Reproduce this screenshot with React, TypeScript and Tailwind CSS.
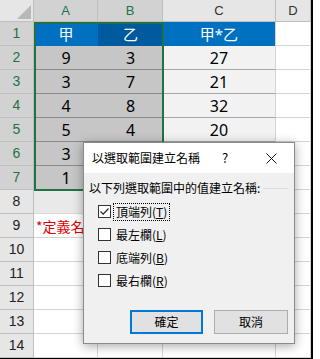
import React from "react";

const cols = ["A", "B", "C", "D"];

// B6:C7 sit under the dialog, so they are left out
const data: (string | number)[][] = [
  ["甲", "乙", "甲*乙"],
  [9, 3, 27],
  [3, 7, 21],
  [4, 8, 32],
  [5, 4, 20],
  [3, "", ""],
  [1, "", ""],
];

const rows = Array.from({ length: 14 }, (_, i) => i + 1);

function cellClass(r: number, c: number): string {
  if (r === 1 && c === 0) return "bg-[#0070c0] text-white";
  if (r === 1 && c === 1) return "bg-[#005a9e] text-white";
  if (r === 1 && c === 2) return "bg-[#0070c0] text-white border-r border-[#d4d4d4]";
  if (r <= 7 && c < 2) return "bg-[#c6c6c6] border-b border-[#8a8a8a] text-black";
  if (r <= 7 && c === 2) return "bg-[#f2f2f2] border-b border-r border-b-[#a6a6a6] border-r-[#d4d4d4] text-black";
  if (r === 8 && c < 3) return "bg-[#e9e9e9] border-b border-r border-[#d9d9d9]";
  return "bg-white border-r border-b border-[#d4d4d4]";
}

function CheckRow({ label, k, checked, focused }: { label: string; k: string; checked?: boolean; focused?: boolean }) {
  return (
    <div className="flex h-[23px] items-center pl-[14px]">
      <div className="flex h-[13px] w-[13px] items-center justify-center border border-[#333333] bg-white">
        {checked && (
          <svg width="11" height="11" viewBox="0 0 11 11">
            <polyline points="1.5,5.5 4.2,8.2 9.5,2.5" fill="none" stroke="#222" strokeWidth="1.2" />
          </svg>
        )}
      </div>
      <span
        className={
          focused
            ? "ml-[2px] border border-dotted border-black px-[2px] text-[12px] leading-[16px] text-black"
            : "ml-[2px] border border-transparent px-[2px] text-[12px] leading-[16px] text-black"
        }
      >
        {label}(<span className="underline">{k}</span>)
      </span>
    </div>
  );
}

export default function App() {
  return (
    <div className="relative h-[359px] w-[313px] overflow-hidden border-b border-r-2 border-black bg-white font-['Liberation_Sans','Noto_Sans_CJK_TC',sans-serif]">
      <div className="grid grid-cols-[34px_64px_65px_113px_35px] grid-rows-[22px_repeat(14,24px)]">
        {/* corner */}
        <div className="relative border-b border-r border-[#bfbfbf] bg-[#e6e6e6]">
          <svg className="absolute left-0 top-0" width="34" height="22" viewBox="0 0 34 22">
            <polygon points="31,5 31,19 17,19" fill="#b8b8b8" />
          </svg>
        </div>
        {cols.map((c, i) => (
          <div
            key={c}
            className={
              i < 2
                ? "flex items-center justify-center border-b border-r border-[#bfbfbf] bg-[#d2d2d2] text-[13px] text-[#217346]"
                : "flex items-center justify-center border-b border-r border-[#bfbfbf] bg-[#e6e6e6] text-[13px] text-[#333333]"
            }
          >
            {c}
          </div>
        ))}
        {rows.map((r) => (
          <React.Fragment key={r}>
            <div
              className={
                r <= 7
                  ? "flex items-center justify-center border-b border-r border-[#bfbfbf] bg-[#d2d2d2] text-[14px] text-[#217346]"
                  : "flex items-center justify-center border-b border-r border-[#bfbfbf] bg-[#e6e6e6] text-[14px] text-[#222222]"
              }
            >
              {r}
            </div>
            {cols.map((c, ci) => {
              const v = r <= 7 && ci < 3 ? data[r - 1][ci] : "";
              return (
                <div
                  key={c}
                  className={
                    "flex items-center justify-center whitespace-nowrap pt-[1px] font-['Noto_Sans','Noto_Sans_CJK_TC',sans-serif] " +
                    (r === 1 ? "text-[15px] " : "text-[16px] ") +
                    cellClass(r, ci)
                  }
                >
                  {r === 9 && ci === 0 ? (
                    <span className="w-full pl-[2px] text-[14px] text-[#e00000] font-['Noto_Sans_CJK_TC',sans-serif]">
                      *定義名
                    </span>
                  ) : (
                    v
                  )}
                </div>
              );
            })}
          </React.Fragment>
        ))}
      </div>

      {/* selection border */}
      <div className="pointer-events-none absolute left-[34px] top-[22px] h-[169px] w-[130px] border-2 border-[#217346]" />

      {/* dialog */}
      <div className="absolute left-[83px] top-[142px] flex h-[202px] w-[212px] flex-col border border-[#8a8a8a] bg-[#f0f0f0] shadow-[0_2px_10px_rgba(0,0,0,0.35)] font-['Noto_Sans_CJK_TC',sans-serif]">
        <div className="flex h-[30px] items-center bg-white">
          <span className="pl-[8px] text-[12px] text-black">以選取範圍建立名稱</span>
          <span className="ml-auto flex w-[46px] justify-center text-[13px] text-black">?</span>
          <span className="flex w-[46px] justify-center">
            <svg width="11" height="11" viewBox="0 0 11 11">
              <path d="M0.5 0.5 L10.5 10.5 M10.5 0.5 L0.5 10.5" stroke="#111" strokeWidth="1" />
            </svg>
          </span>
        </div>
        <div className="flex flex-1 flex-col">
          <div className="mt-[7px] flex items-center gap-[3px] pl-[5px] pr-[6px]">
            <span className="text-[12px] leading-[16px] text-black">以下列選取範圍中的值建立名稱:</span>
            <div className="h-px flex-1 bg-[#dcdcdc]" />
          </div>
          <div className="mt-[4px] flex flex-col">
            <CheckRow label="頂端列" k="T" checked focused />
            <CheckRow label="最左欄" k="L" />
            <CheckRow label="底端列" k="B" />
            <CheckRow label="最右欄" k="R" />
          </div>
          <div className="mt-auto flex justify-end gap-[11px] pb-[9px] pr-[6px]">
            <button className="flex h-[24px] w-[73px] items-center justify-center border-2 border-[#0078d7] bg-[#e1e1e1] text-[12px] text-black">
              確定
            </button>
            <button className="flex h-[24px] w-[74px] items-center justify-center border border-[#adadad] bg-[#e1e1e1] text-[12px] text-black">
              取消
            </button>
          </div>
        </div>
      </div>
    </div>
  );
}
